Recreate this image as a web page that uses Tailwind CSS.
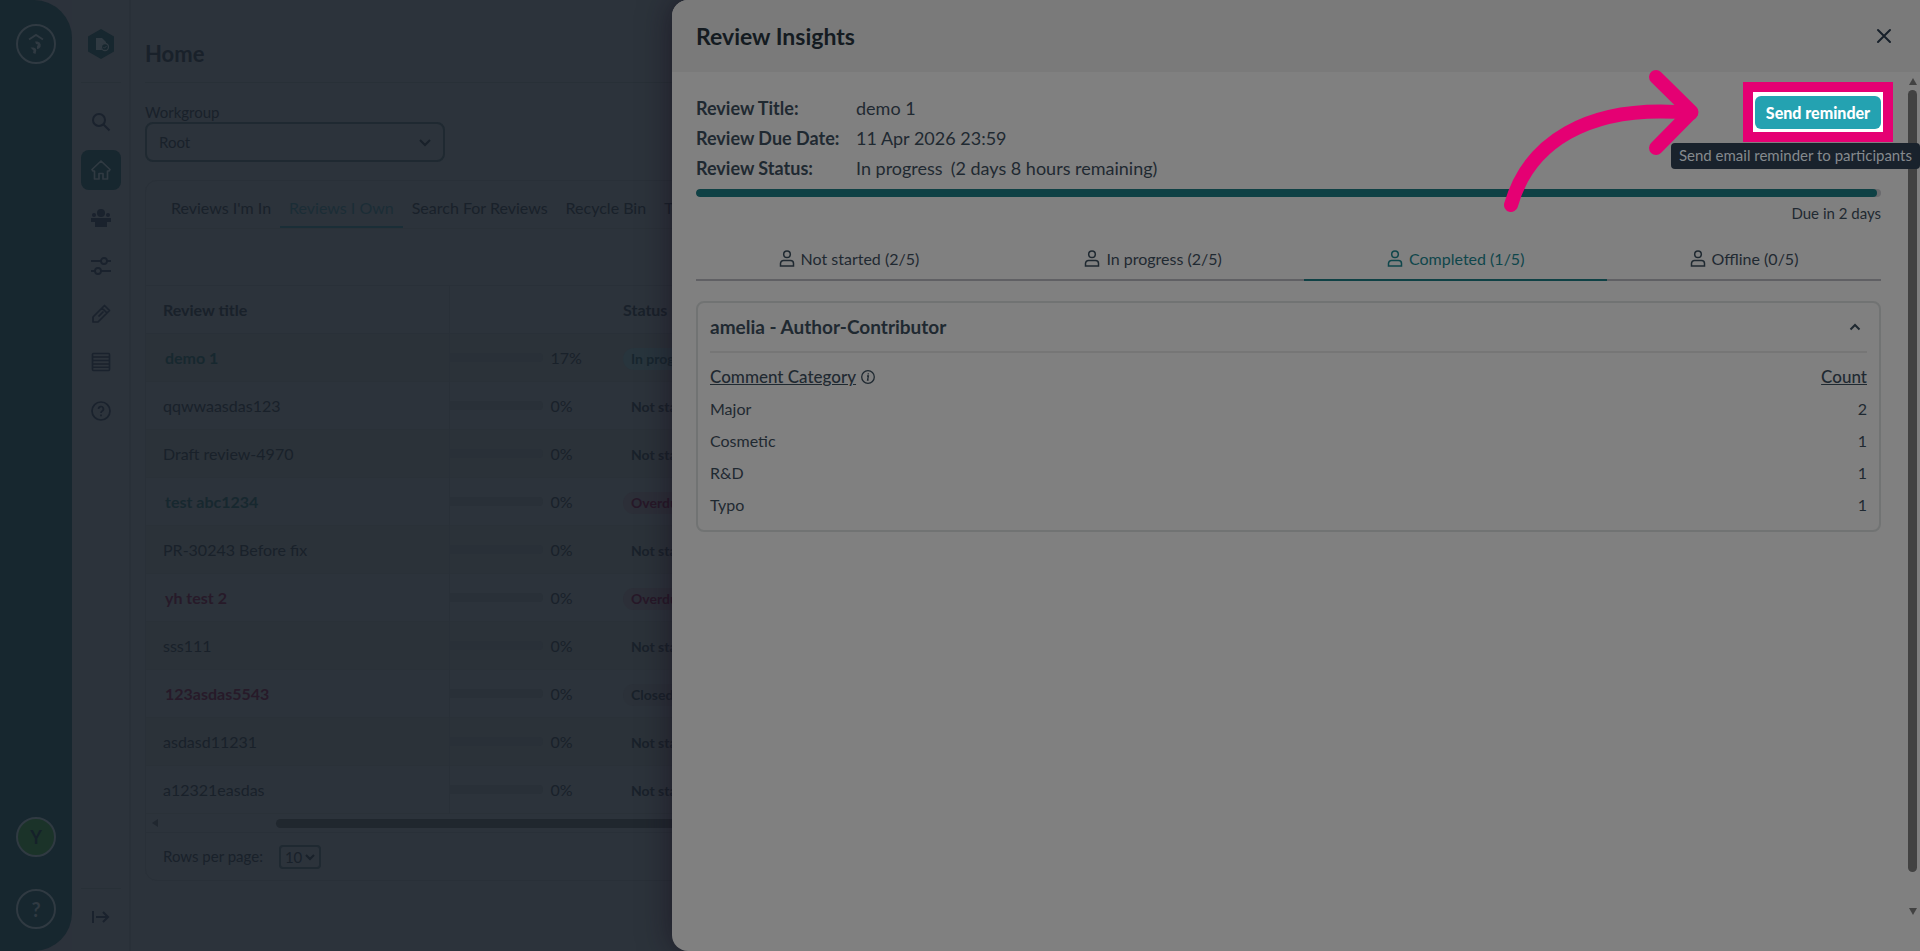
<!DOCTYPE html>
<html lang="en">
<head>
<meta charset="utf-8">
<title>Review Insights</title>
<script src="https://cdn.jsdelivr.net/npm/@tailwindcss/browser@4"></script>
</head>
<body class="relative flex h-screen overflow-hidden bg-[#2c333b] font-['Lato',sans-serif] text-[16px] text-[#19212a]">

<!-- Product rail -->
<aside class="w-18 shrink-0 bg-[#2c323b]">
  <div class="flex h-full flex-col items-center rounded-r-[38px] bg-[#17272f] pt-6 pb-[22px]">
    <a href="#" aria-label="Workspace" class="flex size-10 items-center justify-center rounded-full border-2 border-[#303a42]">
      <svg class="size-6" viewBox="0 0 24 24"><path d="M5 7.500l7-4.500 7 4.500" fill="none" stroke="#303a42" stroke-width="2"/><path d="M11 9.500h2.500a3.800 3.800 0 0 1 1.500 7l-2 .8v-3l1-1.800-2-.5z" fill="#303a42"/><path d="M6.500 15.500h3c1.800.3 2.800 1.500 2.800 3L11.500 22l-2.500-1 .5-2.500z" fill="#303a42"/></svg>
    </a>
    <button class="mt-auto size-10 rounded-full border-2 border-[#303a42] bg-[#1b3329] text-[18px] font-bold text-[#15212a]">Y</button>
    <button class="mt-8 size-10 rounded-full border-2 border-[#303a42] text-[20px] font-bold text-[#303a42]">?</button>
  </div>
</aside>

<!-- Section rail -->
<nav aria-label="Sections" class="flex w-[59px] shrink-0 flex-col items-center border-r-2 border-[#293038] text-[#1a222d]">
  <a href="#" aria-label="Reviews" class="mt-7 block h-8 w-7">
    <svg class="h-8 w-7" viewBox="0 0 28 32"><path d="M14 1l13 7.500v15L14 31 1 23.500v-15z" fill="#17272f"/><path d="M9 10h6l4 4v2a4.500 4.500 0 0 0-4 6H9z" fill="#303a42"/><circle cx="18" cy="19" r="3.500" fill="#17272f" stroke="#303a42" stroke-width="1.300"/><path d="M16.500 19l1 1.200 2-2.200" fill="none" stroke="#303a42"/></svg>
  </a>
  <hr class="mt-[22px] w-10 border-[#283037]">
  <div class="mt-[19px] flex flex-col items-center gap-2">
    <a href="#" aria-label="Search" class="flex size-10 items-center justify-center"><svg class="size-5" viewBox="0 0 20 20" fill="none" stroke="currentColor" stroke-width="2"><circle cx="8" cy="8" r="6"/><path d="M12.500 12.500l6 6"/></svg></a>
    <a href="#" aria-label="Home" class="flex size-10 items-center justify-center rounded-lg bg-[#17272f] text-[#303a42]"><svg class="size-5" viewBox="0 0 20 20" fill="none" stroke="currentColor" stroke-width="1.700" stroke-linejoin="round"><path d="M1 9.500L10 1l9 8.500-1 1.500h-1.500v8H12v-5.500H8V19H3.500v-8H2z"/></svg></a>
    <a href="#" aria-label="People" class="flex size-10 items-center justify-center"><svg class="size-5" viewBox="0 0 20 20" fill="currentColor"><circle cx="10" cy="5" r="4"/><circle cx="3" cy="7" r="2"/><circle cx="17" cy="7" r="2"/><path d="M0 10h20v4h-4v5H4v-5H0z"/></svg></a>
    <a href="#" aria-label="Preferences" class="flex size-10 items-center justify-center"><svg class="size-5" viewBox="0 0 20 20" fill="none" stroke="currentColor" stroke-width="1.800"><path d="M0 5h10M16 5h4M0 15h4M10 15h10"/><circle cx="13" cy="5" r="3"/><circle cx="7" cy="15" r="3"/></svg></a>
    <a href="#" aria-label="Edit" class="flex size-10 items-center justify-center"><svg class="size-5" viewBox="0 0 20 20" fill="none" stroke="currentColor" stroke-width="1.700" stroke-linejoin="round"><path d="M2 18v-5L13.500 1.500l5 5L7 18zM11 4l5 5M7.500 12.500l5-5"/></svg></a>
    <a href="#" aria-label="Lists" class="flex size-10 items-center justify-center"><svg class="size-5" viewBox="0 0 20 20" fill="none" stroke="currentColor" stroke-width="1.600"><rect x="1.500" y="1.500" width="17" height="17" rx="1"/><path d="M2 5h16M2 8.500h16M2 12h16M2 15.200h16"/></svg></a>
    <a href="#" aria-label="Help" class="mt-px flex size-10 items-center justify-center"><svg class="size-5" viewBox="0 0 20 20" fill="none" stroke="currentColor" stroke-width="1.700"><circle cx="10" cy="10" r="9"/><path d="M7.600 8a2.400 2.400 0 1 1 3.600 2c-.9.500-1.200 1-1.200 2M10 13.500v1.800"/></svg></a>
  </div>
  <hr class="mt-auto w-10 border-[#283037]">
  <button aria-label="Expand menu" class="mt-4 mb-[22px] flex h-6 items-center"><svg class="h-4 w-5" viewBox="0 0 20 16" fill="none" stroke="currentColor" stroke-width="2"><path d="M2 2v12M5 8h12M12 3l5 5-5 5"/></svg></button>
</nav>

<!-- Home page -->
<main class="min-w-0 flex-1 overflow-hidden pl-[14px]">
  <h1 class="flex h-[83px] items-center border-b border-[#283037] pt-6 text-[22px] font-bold">Home</h1>
  <label for="workgroup" class="mt-[19px] block text-[15px] leading-5">Workgroup</label>
  <div class="relative h-10 w-75">
    <select id="workgroup" class="h-10 w-full appearance-none rounded-lg border-2 border-[#1f2931] px-3 text-[15px]"><option>Root</option></select>
    <svg class="pointer-events-none absolute top-3 right-3 size-4" viewBox="0 0 16 16" fill="none" stroke="currentColor" stroke-width="2"><path d="M3 6l5 5 5-5"/></svg>
  </div>

  <section class="mt-[18px] rounded-l-xl border border-[#293038]">
    <nav aria-label="Review lists" class="flex h-12 border-b border-[#2a3138] pl-4 whitespace-nowrap">
      <a href="#" class="flex items-center px-[9px] pt-[6px]">Reviews I'm In</a>
      <a href="#" aria-current="page" class="flex items-center border-b-2 border-[#1a2e37] px-[9px] pt-2 text-[#1b2d36]">Reviews I Own</a>
      <a href="#" class="flex items-center px-[9px] pt-[6px]">Search For Reviews</a>
      <a href="#" class="flex items-center px-[9px] pt-[6px]">Recycle Bin</a>
      <a href="#" class="flex items-center px-[9px] pt-[6px]">Templates</a>
    </nav>
    <div class="mt-14 overflow-hidden">
      <table class="w-full min-w-[1100px] table-fixed border-collapse text-left">
        <colgroup><col class="w-[303px]"><col class="w-[174px]"><col></colgroup>
        <thead>
          <tr class="h-12 border-y border-[#293038] font-bold">
            <th scope="col" class="border-r border-[#293038] pl-[17px]">Review title</th><th scope="col" aria-label="Progress"></th><th scope="col">Status</th>
          </tr>
        </thead>
        <tbody id="reviews"></tbody>
      </table>
    </div>
    <div aria-hidden="true" class="flex h-[18px] items-center">
      <div class="ml-[6px] border-y-4 border-r-[6px] border-y-transparent border-r-[#20272f]"></div>
      <div class="ml-[118px] h-[9px] flex-1 rounded-l-full bg-[#20272e]"></div>
    </div>
    <div class="flex h-12 items-center border-t border-[#293038] pl-[17px] text-[15px]">
      <label for="rows">Rows per page:</label>
      <div class="relative ml-4">
        <select id="rows" class="h-6 w-[42px] appearance-none rounded border-2 border-[#1f2931] pl-1 text-[15px] leading-4"><option>10</option></select>
        <svg class="pointer-events-none absolute top-[7px] right-[6px] size-[10px]" viewBox="0 0 10 10" fill="none" stroke="currentColor" stroke-width="2"><path d="M1 3l4 4 4-4"/></svg>
      </div>
    </div>
  </section>
</main>

<!-- Review insights sheet -->
<aside aria-labelledby="sheet-title" class="absolute inset-y-0 right-0 flex w-[65%] flex-col overflow-hidden rounded-l-2xl bg-[#808080] shadow-[0_0_32px_rgba(20,10,25,0.6)]">
  <header class="flex h-18 shrink-0 items-center justify-between bg-[#7a7a7a] pr-7 pl-6">
    <h2 id="sheet-title" class="text-[23px] font-bold text-[#141b21]">Review Insights</h2>
    <button aria-label="Close"><svg class="size-4" viewBox="0 0 16 16" fill="none" stroke="#17202a" stroke-width="2" stroke-linecap="round"><path d="M2 2l12 12M14 2L2 14"/></svg></button>
  </header>
  <div class="flex min-h-0 flex-1">
    <div class="min-w-0 flex-1 pt-[21px] pl-6 text-[#1f2931]">
      <div class="flex items-start justify-between">
        <dl class="grid grid-cols-[160px_1fr] text-[18px] leading-[30px]">
          <dt class="font-bold">Review Title:</dt><dd>demo 1</dd>
          <dt class="font-bold">Review Due Date:</dt><dd>11 Apr 2026 23:59</dd>
          <dt class="font-bold">Review Status:</dt><dd class="flex gap-2"><span>In progress</span><span>(2 days 8 hours remaining)</span></dd>
        </dl>
        <div class="-mt-[11px] -mr-3 border-10 border-[#e50073] bg-white px-[2px] pt-1 pb-[3px]">
          <button aria-describedby="tip" class="block h-[33px] w-[126px] rounded-md bg-[#24a2b1] text-[16px] font-black whitespace-nowrap text-white">Send reminder</button>
        </div>
      </div>
      <div role="progressbar" aria-label="Time elapsed" aria-valuenow="99" aria-valuemin="0" aria-valuemax="100" class="mt-[6px] h-2 overflow-hidden rounded-full bg-[#6a6a6d]"><div class="h-2 rounded-full bg-[#0f4145]" style="width:99.7%"></div></div>
      <p class="mt-1 text-right text-[15px] leading-6">Due in 2 days</p>
      <div role="tablist" class="mt-[10px] flex h-[46px] text-[16px] whitespace-nowrap">
        <button role="tab" class="flex flex-auto items-center justify-center gap-[6px] border-b-2 border-[#606064] pt-[3px]"><svg class="h-[17px] w-4" viewBox="0 0 16 17" fill="none" stroke="currentColor" stroke-width="1.500"><circle cx="8" cy="4.300" r="3.300"/><path d="M1.500 16v-2.500A3 3 0 0 1 4.500 10.500h7a3 3 0 0 1 3 3V16z"/></svg>Not started (2/5)</button>
        <button role="tab" class="flex flex-auto items-center justify-center gap-[6px] border-b-2 border-[#606064] pt-[3px]"><svg class="h-[17px] w-4" viewBox="0 0 16 17" fill="none" stroke="currentColor" stroke-width="1.500"><circle cx="8" cy="4.300" r="3.300"/><path d="M1.500 16v-2.500A3 3 0 0 1 4.500 10.500h7a3 3 0 0 1 3 3V16z"/></svg>In progress (2/5)</button>
        <button role="tab" aria-selected="true" class="flex flex-auto items-center justify-center gap-[6px] border-b-2 border-[#0f4145] pt-[3px] text-[#0f464b]"><svg class="h-[17px] w-4" viewBox="0 0 16 17" fill="none" stroke="currentColor" stroke-width="1.500"><circle cx="8" cy="4.300" r="3.300"/><path d="M1.500 16v-2.500A3 3 0 0 1 4.500 10.500h7a3 3 0 0 1 3 3V16z"/></svg>Completed (1/5)</button>
        <button role="tab" class="flex flex-auto items-center justify-center gap-[6px] border-b-2 border-[#606064] pt-[3px]"><svg class="h-[17px] w-4" viewBox="0 0 16 17" fill="none" stroke="currentColor" stroke-width="1.500"><circle cx="8" cy="4.300" r="3.300"/><path d="M1.500 16v-2.500A3 3 0 0 1 4.500 10.500h7a3 3 0 0 1 3 3V16z"/></svg>Offline (0/5)</button>
      </div>
      <section class="mt-5 rounded-lg border-2 border-[#717373] px-3 pb-[9px]">
        <button aria-expanded="true" class="flex h-[50px] w-full items-center justify-between border-b-2 border-[#767676] pr-[6px] text-[19px] font-bold">amelia - Author-Contributor<svg class="h-3 w-3" viewBox="0 0 12 12" fill="none" stroke="currentColor" stroke-width="2"><path d="M1.500 8.500L6 4l4.500 4.500"/></svg></button>
        <table class="mt-2 w-full text-[16px] leading-8">
          <thead class="text-[17px]"><tr>
            <th scope="col" class="text-left font-medium"><span class="flex items-center gap-[5px]"><span class="underline">Comment Category</span><svg class="size-[14px]" viewBox="0 0 14 14" fill="none" stroke="currentColor" stroke-width="1.300"><circle cx="7" cy="7" r="6.300"/><path d="M6 6h1.400l-.8 4h1M7.300 3.300l-.1 1.200"/></svg></span></th>
            <th scope="col" class="text-right font-medium underline">Count</th>
          </tr></thead>
          <tbody>
            <tr><td>Major</td><td class="text-right">2</td></tr>
            <tr><td>Cosmetic</td><td class="text-right">1</td></tr>
            <tr><td>R&amp;D</td><td class="text-right">1</td></tr>
            <tr><td>Typo</td><td class="text-right">1</td></tr>
          </tbody>
        </table>
      </section>
    </div>
    <div aria-hidden="true" class="ml-6 flex w-[15px] flex-col items-center pt-[6px] pb-9">
      <div class="border-x-4 border-b-[7px] border-x-transparent border-b-[#424242]"></div>
      <div class="mt-[5px] mb-9 w-[9px] flex-1 rounded-full bg-[#424242]"></div>
      <div class="border-x-4 border-t-[7px] border-x-transparent border-t-[#424242]"></div>
    </div>
  </div>
</aside>

<div id="tip" role="tooltip" class="absolute top-[143px] right-0 flex h-[26px] items-center rounded bg-[#19222c] px-2 pb-px text-[15px] whitespace-nowrap text-[#858a8e]">Send email reminder to participants</div>

<!-- Callout arrow -->
<svg aria-hidden="true" class="pointer-events-none absolute top-[60px] right-[210px] h-[160px] w-[210px]" viewBox="1500 60 210 160" fill="none" stroke="#e50073" stroke-width="14" stroke-linecap="round" stroke-linejoin="round"><path d="M1511 205C1528 145 1585 103 1691 113"/><path d="M1656 77L1691.500 112L1656 148"/></svg>

<script>
const reviews = [
  ['demo 1', '17%', 'In progress', 'link'], ['qqwwaasdas123', '0%', 'Not started'],
  ['Draft review-4970', '0%', 'Not started'], ['test abc1234', '0%', 'Overdue', 'link'],
  ['PR-30243 Before fix', '0%', 'Not started'], ['yh test 2', '0%', 'Overdue', 'late'],
  ['sss111', '0%', 'Not started'], ['123asdas5543', '0%', 'Closed', 'late'],
  ['asdasd11231', '0%', 'Not started'], ['a12321easdas', '0%', 'Not started'],
];
const titleStyle = { link: 'pl-[2px] font-bold text-[#17282f]', late: 'pl-[2px] font-bold text-[#271a29]' };
const badgeStyle = { 'In progress': 'bg-[#28353d] text-[#17262e]', Overdue: 'bg-[#2c2f38] text-[#271828]', Closed: 'bg-[#2b3139]' };
document.getElementById('reviews').innerHTML = reviews.map(([title, pct, status, kind], i) => `
  <tr class="h-12 border-b border-[#2a3138] ${i % 2 ? '' : 'bg-[#2b3239]'}">
    <td class="border-r border-[#293038] pl-[17px]">${kind ? `<a href="#" class="${titleStyle[kind]}">${title}</a>` : title}</td>
    <td><div class="flex items-center gap-2"><div class="h-[9px] w-[93px] rounded-r bg-[#293038]"></div>${pct}</div></td>
    <td><span class="inline-block h-[22px] rounded-full px-2 text-[14px] leading-[22px] font-bold ${badgeStyle[status] || ''}">${status}</span></td>
  </tr>`).join('');
</script>
</body>
</html>
